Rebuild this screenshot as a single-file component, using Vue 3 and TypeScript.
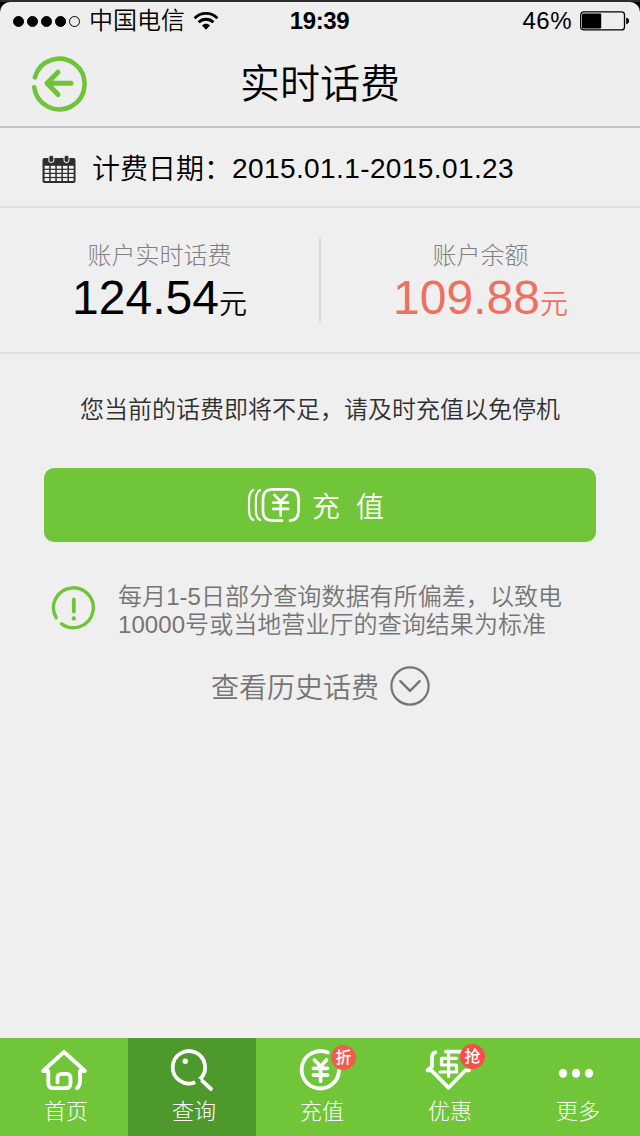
<script setup lang="ts">
interface Tab {
  id: string
  label: string
  badge?: string
}

const signalDots: boolean[] = [true, true, true, true, false]

const tabs: Tab[] = [
  { id: 'home', label: '首页' },
  { id: 'query', label: '查询' },
  { id: 'topup', label: '充值', badge: '折' },
  { id: 'offers', label: '优惠', badge: '抢' },
  { id: 'more', label: '更多' },
]
const activeTab = 'query'
</script>

<template>
  <div class="screen">
    <div class="panel">
      <div class="status">
        <div class="carrier">
          <div class="dots">
            <i v-for="(on, i) in signalDots" :key="i" class="dot" :class="{ on }"></i>
          </div>
          <span class="operator">中国电信</span>
          <svg class="wifi" width="26" height="20" viewBox="0 0 26 20">
            <g fill="none" stroke="#000" stroke-width="2.9">
              <path d="M1.6 7.2C8 0.7 18 0.7 24.4 7.2" />
              <path d="M5.6 11.3C9.9 7.2 16.1 7.2 20.4 11.3" />
            </g>
            <path d="M9 14.6C11.2 12.2 14.8 12.2 17 14.6L13 18.7Z" fill="#000" />
          </svg>
        </div>
        <span class="clock">19:39</span>
        <div class="power">
          <span>46%</span>
          <svg class="battery" width="50" height="20" viewBox="0 0 50 20">
            <rect x="0.7" y="0.9" width="43.8" height="18" rx="3" fill="none" stroke="#000" stroke-width="1.3" />
            <rect x="2" y="2.6" width="19.2" height="14.8" rx="1" fill="#000" />
            <path d="M46.2 6.8C50 7.2 50 12.8 46.2 13.2Z" fill="#000" />
          </svg>
        </div>
      </div>
      <header class="titlebar">
        <svg class="back" width="60" height="60" viewBox="0 0 60 60">
          <g fill="none" stroke="#6fc439" stroke-linecap="round" stroke-linejoin="round">
            <path d="M4.9 24.3A25.3 25.3 0 1 1 4.2 34.3" stroke-width="4.6" />
            <path d="M41 30.3H18M28 19.2L17 30.3L28 41.6" stroke-width="5" />
          </g>
        </svg>
        <h1>实时话费</h1>
      </header>
    </div>

    <section class="period">
      <svg class="calendar" width="34" height="30" viewBox="0 0 34 30">
        <rect x="0.5" y="4" width="33" height="25" rx="2" fill="#2e2e2e" />
        <g fill="#f4f4f4">
          <template v-for="r in 4" :key="r">
            <rect v-for="c in 5" :key="c" :x="2.6 + (c - 1) * 6.1" :y="11.8 + (r - 1) * 4.1" width="4.6" height="2.9" />
          </template>
        </g>
        <rect x="6.8" y="1.2" width="5" height="7.4" rx="2.5" fill="#2e2e2e" stroke="#d9d9d9" stroke-width="1.1" />
        <rect x="22" y="1.2" width="5" height="7.4" rx="2.5" fill="#2e2e2e" stroke="#d9d9d9" stroke-width="1.1" />
      </svg>
      <span class="period-label">计费日期：</span>
      <span class="period-range">2015.01.1-2015.01.23</span>
    </section>

    <section class="amounts">
      <div class="amount">
        <div class="amount-label">账户实时话费</div>
        <div class="amount-value">124.54<small>元</small></div>
      </div>
      <div class="divider"></div>
      <div class="amount due">
        <div class="amount-label">账户余额</div>
        <div class="amount-value">109.88<small>元</small></div>
      </div>
    </section>

    <p class="tip">您当前的话费即将不足，请及时充值以免停机</p>

    <button class="recharge" type="button">
      <svg width="54" height="36" viewBox="0 0 54 36">
        <g fill="none" stroke="#fff" stroke-linecap="round" stroke-linejoin="round">
          <path d="M6.2 3C2.2 5.5 2 9 2 18S2.2 30.5 6.2 33" stroke-width="2.2" />
          <path d="M13 3C9 5.5 8.8 9 8.8 18S9 30.5 13 33" stroke-width="2.2" />
          <path d="M35 33.7H26Q16 33.7 16 24V12Q16 2.3 26 2.3H41.5Q51.5 2.3 51.5 12V24Q51.5 33 43 33.7" stroke-width="2.7" />
          <path d="M27.5 8L33.7 14.5L40 8M26.2 15.6H41.2M26.2 21.9H41.2M33.7 14.5V28.8" stroke-width="2.6" />
        </g>
      </svg>
      <span>充</span><span>值</span>
    </button>

    <section class="notice">
      <svg width="46" height="46" viewBox="0 0 46 46">
        <g fill="none" stroke="#6fc439" stroke-linecap="round">
          <path d="M5.2 31.8A19.9 19.9 0 1 1 10.6 37.8" stroke-width="3.4" />
          <path d="M22.8 13.5V25.5" stroke-width="3.8" />
        </g>
        <circle cx="22.8" cy="32.4" r="2.2" fill="#6fc439" />
      </svg>
      <p>每月1-5日部分查询数据有所偏差，以致电<br />10000号或当地营业厅的查询结果为标准</p>
    </section>

    <div class="history">
      <span>查看历史话费</span>
      <svg width="42" height="42" viewBox="0 0 42 42">
        <g fill="none" stroke="#757575" stroke-linecap="round" stroke-linejoin="round">
          <circle cx="21" cy="21" r="18.6" stroke-width="2.2" />
          <path d="M11.3 16.2L21 25.8L30.7 16.2" stroke-width="2.4" />
        </g>
      </svg>
    </div>

    <nav class="tabs">
      <a v-for="tab in tabs" :key="tab.id" class="tab" :class="{ active: tab.id === activeTab }">
        <span class="icon">
          <svg width="56" height="48" viewBox="0 0 56 48" fill="none" stroke="#fff" stroke-width="3.8" stroke-linecap="round" stroke-linejoin="round">
            <template v-if="tab.id === 'home'">
              <path d="M11.5 27H7L28 8L49 27H44.5" />
              <path d="M12.3 27V39Q12.3 44.2 17 44.2H30Q34.5 44.2 34.5 39V34Q34.5 29.8 30.5 29.8H26Q21.5 29.8 21.5 34V38.5" />
              <path d="M44 27V37Q44 42 41 44.2" />
            </template>
            <template v-else-if="tab.id === 'query'">
              <path d="M30.2 38.6A16.2 16.2 0 1 1 36.2 34.9L47 45" />
              <circle cx="21.3" cy="17.3" r="2.7" fill="#fff" stroke="none" />
              <path d="M31.5 38.8L36.3 35.6" stroke="#4e992c" stroke-width="3" stroke-linecap="butt" />
            </template>
            <template v-else-if="tab.id === 'topup'">
              <path d="M35.8 8.6A18.7 18.7 0 1 0 47 27" />
              <path d="M22.5 16L28.6 22.5L34.5 16M21.5 24.3H35.5M21.5 31H35.5M28.6 22.5V37" />
            </template>
            <template v-else-if="tab.id === 'offers'">
              <path d="M15.3 8.3Q12 9 12 13V22.5L7.5 26.3H11.5L28.6 43.8L45.5 26.3H49" />
              <path d="M26 7.7H41" />
              <path d="M36.5 14.3H21.5V21H36.5V28H20M28.6 10.5V32.5" stroke-width="3.2" />
            </template>
            <g v-else fill="#fff" stroke="none">
              <ellipse cx="15" cy="29.3" rx="4.1" ry="4.5" />
              <ellipse cx="28" cy="29.3" rx="4.1" ry="4.5" />
              <ellipse cx="41" cy="29.3" rx="4.1" ry="4.5" />
            </g>
          </svg>
          <em v-if="tab.badge" class="badge" :class="tab.id">{{ tab.badge }}</em>
        </span>
        <span class="tab-label">{{ tab.label }}</span>
      </a>
    </nav>
  </div>
</template>

<style>
body {
  margin: 0;
  background: #000;
}
</style>

<style scoped>
.screen {
  width: 640px;
  height: 1136px;
  box-sizing: border-box;
  display: flex;
  flex-direction: column;
  overflow: hidden;
  border-top: 2px solid #2c2c2c;
  background: linear-gradient(#000 20px, #efefef 20px);
  font-family: "Liberation Sans", "Noto Sans CJK SC", sans-serif;
  font-weight: 350;
  color: #000;
}
.panel {
  height: 124px;
  flex: none;
  border-bottom: 2px solid #c3c3c3;
  border-radius: 10px 10px 0 0;
  background: #eee;
}
.status {
  display: grid;
  grid-template-columns: 1fr auto 1fr;
  align-items: center;
  height: 38px;
  padding: 0 10px 0 13px;
  font-size: 24px;
  line-height: 38px;
}
.carrier {
  display: flex;
  align-items: center;
}
.dots {
  display: flex;
  gap: 3px;
  width: 76px;
}
.dot {
  width: 11px;
  height: 11px;
  box-sizing: border-box;
  border: 1.3px solid #000;
  border-radius: 50%;
}
.dot.on {
  background: #000;
}
.operator {
  width: 104px;
}
.clock {
  margin-right: 4px;
  font-size: 24px;
  font-weight: 700;
  letter-spacing: -0.4px;
}
.power {
  display: flex;
  justify-content: flex-end;
  align-items: center;
  gap: 8px;
  letter-spacing: 0.5px;
}
.titlebar {
  display: grid;
  grid-template-columns: 60px 1fr 60px;
  align-items: center;
  height: 86px;
  padding: 0 30px;
}
.back {
  margin-top: -1px;
}
h1 {
  margin: 0;
  padding-top: 2px;
  font-size: 40px;
  font-weight: inherit;
  line-height: 84px;
  text-align: center;
}
.period {
  display: flex;
  align-items: center;
  height: 78px;
  flex: none;
  padding-left: 42px;
  border-bottom: 2px solid #dfdfdf;
  font-size: 28px;
  line-height: 32px;
}
.calendar {
  margin: 3px 16px 0 0;
}
.period-label {
  width: 140px;
  padding-top: 5px;
  white-space: nowrap;
}
.period-range {
  padding-top: 4px;
  letter-spacing: 0.4px;
}
.amounts {
  display: flex;
  align-items: center;
  height: 144px;
  flex: none;
  border-bottom: 2px solid #dfdfdf;
}
.amount {
  flex: 1;
  padding-top: 10px;
  text-align: center;
}
.divider {
  width: 2px;
  height: 84px;
  background: #dcdcdc;
}
.amount-label {
  color: #808080;
  font-size: 24px;
  font-weight: 300;
  line-height: 32px;
}
.amount-value {
  font-size: 48px;
  line-height: 52px;
}
.amount-value small {
  font-size: 28px;
}
.due .amount-value {
  color: #ed7161;
}
.tip {
  flex: none;
  margin: 40px 0 0;
  color: #303030;
  font-size: 24px;
  line-height: 32px;
  text-align: center;
}
.recharge {
  display: flex;
  align-items: center;
  height: 74px;
  flex: none;
  margin: 42px 44px 0;
  padding: 0 0 0 203px;
  border: 0;
  border-radius: 10px;
  background: #70c538;
  color: #fff;
  font: inherit;
  font-size: 28px;
}
.recharge span {
  margin-left: 11px;
}
.recharge span + span {
  margin-left: 16px;
}
.notice {
  display: flex;
  align-items: flex-start;
  flex: none;
  margin-top: 41px;
  padding-left: 51px;
}
.notice svg {
  margin-top: 3px;
}
.notice p {
  margin: 0 0 0 21px;
  color: #757575;
  font-size: 24px;
  line-height: 28px;
  letter-spacing: 0.07px;
  white-space: nowrap;
}
.history {
  display: flex;
  align-items: center;
  flex: none;
  margin-top: 26px;
  padding-left: 211px;
  gap: 10px;
  color: #757575;
  font-size: 28px;
  line-height: 36px;
}
.history span {
  padding-top: 5px;
}
.tabs {
  display: grid;
  grid-template-columns: repeat(5, 1fr);
  height: 98px;
  flex: none;
  margin-top: auto;
  background: #70c538;
}
.tab {
  display: flex;
  flex-direction: column;
  align-items: center;
  padding-top: 6px;
  color: #fff;
}
.tab.active {
  background: #4e992c;
}
.icon {
  position: relative;
  width: 56px;
  height: 48px;
}
.icon svg {
  display: block;
}
.tab-label {
  margin: 4px 0 0 4px;
  font-size: 22px;
  font-weight: 300;
  line-height: 32px;
}
.badge {
  position: absolute;
  top: 1px;
  left: 39px;
  width: 25px;
  height: 25px;
  border-radius: 50%;
  background: #f15b50;
  color: #fff;
  font-size: 16px;
  font-style: normal;
  font-weight: 500;
  line-height: 25px;
  text-align: center;
}
.badge.offers {
  top: 0;
  left: 40px;
  background: #fb4c4c;
}
</style>
